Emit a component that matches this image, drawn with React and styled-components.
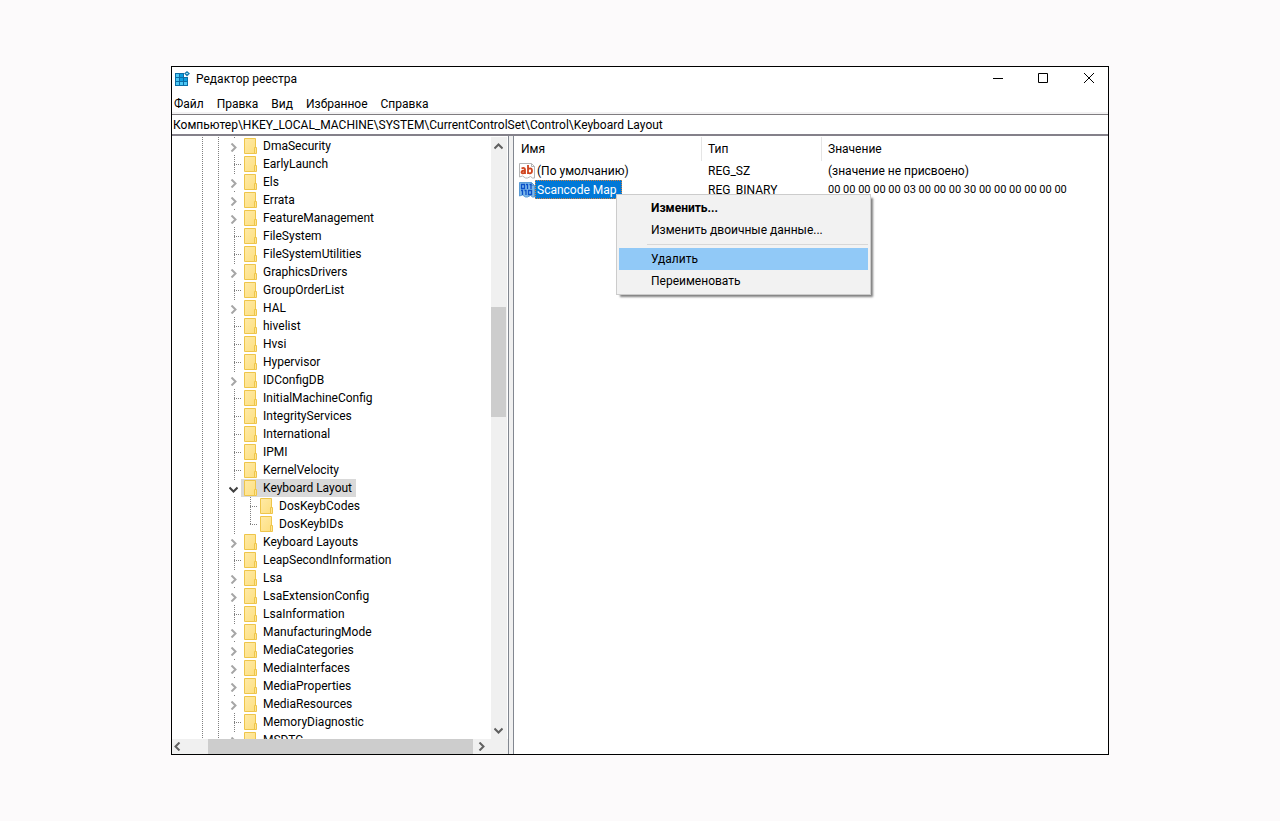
import React, { useState } from 'react'
import styled, { createGlobalStyle, css } from 'styled-components'

const GlobalStyle = createGlobalStyle`
  * {
    box-sizing: border-box;
  }
  body {
    margin: 0;
    background: #fcfafb;
    color: #000;
    font-family: Roboto, "Open Sans", sans-serif;
    font-size: 12px;
    line-height: 18px;
  }
  button, input {
    margin: 0;
    padding: 0;
    border: 0;
    background: none;
    color: inherit;
    font: inherit;
    outline: none;
  }
`

const dotsDown = 'repeating-linear-gradient(to bottom, #808080 0 1px, transparent 1px 2px)'
const dotsAcross = 'repeating-linear-gradient(to right, #808080 0 1px, transparent 1px 2px)'

const Desktop = styled.div`
  display: flex;
  height: 100vh;
  padding: 66px 171px;
`

const Window = styled.main`
  flex: 1;
  display: flex;
  flex-direction: column;
  min-width: 0;
  border: 1px solid #000;
  background: #fff;
`

const TitleBar = styled.header`
  display: flex;
  align-items: center;
  height: 24px;
  padding-left: 2px;
`

const Title = styled.h1`
  flex: 1;
  margin: 0;
  padding-left: 6px;
  font-size: 12px;
  font-weight: 400;
`

const WindowButton = styled.button`
  display: flex;
  align-items: center;
  justify-content: center;
  width: 46px;
  height: 22px;
`

const WindowButtons = styled.div`
  display: flex;
  align-self: flex-start;
  margin-right: -4px;
`

const MenuBar = styled.nav`
  display: flex;
  gap: 13px;
  height: 23px;
  padding: 4px 2px 0;
  border-bottom: 2px solid #f3f2f3;
`

const AddressBar = styled.div`
  display: flex;
  height: 22px;
  border-top: 1px solid #7f7c80;
  border-bottom: 2px solid #84818a;
`

const AddressInput = styled.input`
  flex: 1;
  padding: 0 1px;
`

const Panes = styled.div`
  flex: 1;
  display: flex;
  min-height: 0;
`

const TreePane = styled.section`
  display: flex;
  flex-direction: column;
  width: 337px;
  border-right: 1px solid #828790;
`

const TreeArea = styled.div`
  flex: 1;
  display: flex;
  min-height: 0;
  padding: 1px 1px 0 0;
`

const Tree = styled.ul`
  flex: 1;
  margin: 0;
  padding: 0 0 0 21px;
  overflow: hidden;
  list-style: none;
`

const TreeRow = styled.li`
  display: flex;
  height: 18px;
`

const Guide = styled.span`
  display: flex;
  align-items: center;
  flex: none;
  width: 16px;
  padding-left: 9px;
  background-image: ${dotsDown};
  background-repeat: no-repeat;
  background-position: 9px 0;
  background-size: 1px ${p => (p.$last ? '10px' : '100%')};
`

const Branch = styled.span`
  width: 7px;
  height: 1px;
  background-image: ${dotsAcross};
`

const Expander = styled.button`
  display: flex;
  align-items: center;
  justify-content: center;
  flex: none;
  width: 16px;
  height: 18px;
  padding-top: 2px;
  background: linear-gradient(#808080, #808080) 9px 0 / 1px 1px no-repeat;
`

const Key = styled.button`
  display: flex;
  align-items: center;
  gap: 6px;
  padding: 0 4px 0 3px;
  white-space: nowrap;
  background: ${p => (p.$selected ? '#d9d9d9' : 'none')};
`

const ScrollTrack = styled.div`
  display: flex;
  flex-direction: ${p => (p.$vertical ? 'column' : 'row')};
  flex: none;
  ${p => (p.$vertical ? 'width: 16px;' : 'height: 15px; margin-right: 18px;')}
  background: #f0f0f0;
`

const ScrollButton = styled.button`
  display: flex;
  align-items: center;
  justify-content: center;
  flex: none;
  ${p => (p.$vertical ? 'width: 15px; height: 18px;' : 'width: 17px; height: 15px;')}
  ${p => p.$start && 'margin-left: -3px;'}
`

const ScrollSpace = styled.div`
  flex: ${p => p.$size} 0 0;
`

const ScrollThumb = styled.div`
  flex: ${p => p.$size} 0 0;
  margin-right: ${p => (p.$vertical ? '1px' : '0')};
  background: #cdcdcd;
`

const BottomBar = styled.div`
  background: #f0f0f0;
`

const Splitter = styled.div`
  width: 4px;
  background: #f0f0f0;
`

const ValuesPane = styled.section`
  position: relative;
  flex: 1;
  min-width: 0;
  padding-top: 1px;
  border-left: 1px solid #828790;
`

const ValuesTable = styled.table`
  width: 100%;
  table-layout: fixed;
  border-spacing: 0;
`

const HeadCell = styled.th`
  width: ${p => p.$width || 'auto'};
  height: 24px;
  padding: 0 0 0 ${p => (p.$first ? '7px' : '6px')};
  border-right: ${p => (p.$width ? '1px solid #e5e5e5' : '0')};
  text-align: left;
  font-weight: 400;
`

const Cell = styled.td`
  height: 19px;
  padding: 0 0 0 ${p => (p.$first ? '5px' : '6px')};
  white-space: nowrap;
  ${p => p.$bytes && 'font-size: 11px;'}
`

const ValueName = styled.button`
  display: flex;
  align-items: center;
  height: 19px;
`

const ValueText = styled.span`
  height: 19px;
  padding: 0 4px 0 1px;
  border: 1px dotted transparent;
  line-height: 18px;
  ${p => p.$selected && css`
    border-color: #d0813f;
    background: #0078d7;
    color: #fff;
  `}
`

const ContextMenu = styled.menu`
  position: absolute;
  top: 58px;
  left: 102px;
  width: 255px;
  margin: 0;
  padding: 2px;
  border: 1px solid #ccc;
  background: #f2f2f2;
  box-shadow: 3px 3px 2px -1px rgba(0, 0, 0, .5);
  list-style: none;
`

const MenuItem = styled.button`
  display: block;
  width: 100%;
  height: 22px;
  padding-left: 32px;
  text-align: left;
  font-weight: ${p => (p.$bold ? 700 : 400)};
  background: ${p => (p.$active ? '#91c9f7' : 'none')};
`

const Separator = styled.li`
  height: 1px;
  margin: 3px 0 3px 28px;
  background: #d7d7d7;
`

const RegistryIcon = () => (
  <svg width="16" height="16" viewBox="0 0 16 16" aria-hidden="true">
    <path d="M1 2h9v4h4v9H1z" fill="#0a6da6" />
    <path d="M2 3h3v3H2zM2 7h3v3H2zM2 11h3v3H2zM6 11h3v3H6zM10 11h3v3h-3z" fill="#4cc7f4" />
    <path d="M6 3h3v3H6zM6 7h3v3H6zM10 7h3v3h-3z" fill="#0c9fe0" />
    <path d="M13 0l3 2.500-3 3-3-3z" fill="#1c7fb0" />
    <path d="M12 2h2v1h-2z" fill="#9adff8" />
  </svg>
)

const FolderIcon = () => (
  <svg width="13" height="16" viewBox="0 0 13 16" aria-hidden="true">
    <defs>
      <linearGradient id="folder" x1="0" y1="0" x2="1" y2="1">
        <stop offset="0" stopColor="#ffeaa6" />
        <stop offset="1" stopColor="#fddf80" />
      </linearGradient>
    </defs>
    <path d="M.5.5h11v15H.5z" fill="url(#folder)" stroke="#eec54a" />
    <path d="M10.500 9.500h2v6h-2z" fill="#ffe492" stroke="#eec54a" />
  </svg>
)

const paper = 'M.5.5h12l3 3v11.500h-2l-2-1.500-3 1.500h-2l-3-2-3 1z'

const StringIcon = () => (
  <svg width="16" height="16" viewBox="0 0 16 16" aria-hidden="true">
    <path d={paper} fill="#fff" stroke="#b4b4b4" />
    <path d="M12.500.5v3h3" fill="none" stroke="#b4b4b4" />
    <g fill="none" stroke="#d0451f" strokeWidth="1.800">
      <path d="M2.500 5.500C4.500 4.500 6 5 6 6.500V11M6 7.500C1.500 7.500 2 10.300 3.800 10.300 5 10.300 6 9.500 6 8.500" />
      <path d="M9 2v9M9 7c.5-2 4-2.500 4 .8S9.500 11 9 9" />
    </g>
  </svg>
)

const BinaryIcon = () => (
  <svg width="16" height="16" viewBox="0 0 16 16" aria-hidden="true">
    <path d={paper} fill="#7db8ea" stroke="#5b9bd5" />
    <path d="M12.500.5v3h3" fill="none" stroke="#5b9bd5" />
    <g fill="none" stroke="#0b50c8" strokeWidth="1.300">
      <path d="M2.500 2.500h3v4h-3zM7 2.500h1.500V7M10.500 2.500H12V7" />
      <path d="M2 8.500h1.500V13M5.500 8.500H7V13M9.500 8.500h3v4h-3z" />
    </g>
  </svg>
)

const Chevron = ({ dir, color = '#606060' }) => {
  const angles = { right: 0, down: 90, left: 180, up: 270 }
  return (
    <svg width="9" height="9" viewBox="0 0 9 9" aria-hidden="true">
      <path
        d="M2.500 .5l4 4-4 4"
        fill="none"
        stroke={color}
        strokeWidth="2"
        transform={`rotate(${angles[dir]} 4.500 4.500)`}
      />
    </svg>
  )
}

const menus = ['Файл', 'Правка', 'Вид', 'Избранное', 'Справка']

const keys = [
  { name: 'DmaSecurity', state: 'closed' },
  { name: 'EarlyLaunch' },
  { name: 'Els', state: 'closed' },
  { name: 'Errata', state: 'closed' },
  { name: 'FeatureManagement', state: 'closed' },
  { name: 'FileSystem' },
  { name: 'FileSystemUtilities' },
  { name: 'GraphicsDrivers', state: 'closed' },
  { name: 'GroupOrderList' },
  { name: 'HAL', state: 'closed' },
  { name: 'hivelist' },
  { name: 'Hvsi' },
  { name: 'Hypervisor' },
  { name: 'IDConfigDB', state: 'closed' },
  { name: 'InitialMachineConfig' },
  { name: 'IntegrityServices' },
  { name: 'International' },
  { name: 'IPMI' },
  { name: 'KernelVelocity' },
  { name: 'Keyboard Layout', state: 'open' },
  { name: 'DosKeybCodes', child: true },
  { name: 'DosKeybIDs', child: true, last: true },
  { name: 'Keyboard Layouts', state: 'closed' },
  { name: 'LeapSecondInformation' },
  { name: 'Lsa', state: 'closed' },
  { name: 'LsaExtensionConfig', state: 'closed' },
  { name: 'LsaInformation' },
  { name: 'ManufacturingMode', state: 'closed' },
  { name: 'MediaCategories', state: 'closed' },
  { name: 'MediaInterfaces', state: 'closed' },
  { name: 'MediaProperties', state: 'closed' },
  { name: 'MediaResources', state: 'closed' },
  { name: 'MemoryDiagnostic' },
  { name: 'MSDTC', state: 'closed' },
]

const values = [
  { name: '(По умолчанию)', type: 'REG_SZ', data: '(значение не присвоено)', icon: StringIcon },
  {
    name: 'Scancode Map',
    type: 'REG_BINARY',
    data: '00 00 00 00 00 03 00 00 00 30 00 00 00 00 00 00',
    icon: BinaryIcon,
    selected: true,
  },
]

const TreeItem = ({ item, selected, onSelect }) => (
  <TreeRow>
    <Guide />
    <Guide />
    {item.child && <Guide />}
    {item.state ? (
      <Expander aria-label={item.name}>
        {item.state === 'open'
          ? <Chevron dir="down" color="#404040" />
          : <Chevron dir="right" color="#a6a6a6" />}
      </Expander>
    ) : (
      <Guide $last={item.last}><Branch /></Guide>
    )}
    <Key $selected={selected} onClick={() => onSelect(item.name)}>
      <FolderIcon />
      {item.name}
    </Key>
  </TreeRow>
)

const App = () => {
  const [current, setCurrent] = useState('Keyboard Layout')
  const [path, setPath] = useState(
    'Компьютер\\HKEY_LOCAL_MACHINE\\SYSTEM\\CurrentControlSet\\Control\\Keyboard Layout'
  )

  return (
    <Desktop>
      <GlobalStyle />
      <Window>
        <TitleBar>
          <RegistryIcon />
          <Title>Редактор реестра</Title>
          <WindowButtons>
            <WindowButton aria-label="Свернуть">
              <svg width="11" height="11"><path d="M1 5.500h10" stroke="#000" /></svg>
            </WindowButton>
            <WindowButton aria-label="Развернуть">
              <svg width="11" height="11"><path d="M.5.5h9v9h-9z" fill="none" stroke="#000" /></svg>
            </WindowButton>
            <WindowButton aria-label="Закрыть">
              <svg width="11" height="11"><path d="M0 0l10 10M10 0L0 10" stroke="#000" /></svg>
            </WindowButton>
          </WindowButtons>
        </TitleBar>
        <MenuBar>
          {menus.map(name => <button key={name}>{name}</button>)}
        </MenuBar>
        <AddressBar>
          <AddressInput aria-label="Путь" value={path} onChange={e => setPath(e.target.value)} />
        </AddressBar>
        <Panes>
          <TreePane>
            <TreeArea>
              <Tree>
                {keys.map(item => (
                  <TreeItem
                    key={item.name}
                    item={item}
                    selected={item.name === current}
                    onSelect={setCurrent}
                  />
                ))}
              </Tree>
              <ScrollTrack $vertical>
                <ScrollButton $vertical aria-label="Вверх"><Chevron dir="up" /></ScrollButton>
                <ScrollSpace $size={152} />
                <ScrollThumb $vertical $size={110} />
                <ScrollSpace $size={304} />
                <ScrollButton $vertical aria-label="Вниз"><Chevron dir="down" /></ScrollButton>
              </ScrollTrack>
            </TreeArea>
            <BottomBar>
              <ScrollTrack>
                <ScrollButton $start aria-label="Влево"><Chevron dir="left" /></ScrollButton>
                <ScrollSpace $size={22} />
                <ScrollThumb $size={265} />
                <ScrollButton aria-label="Вправо"><Chevron dir="right" /></ScrollButton>
              </ScrollTrack>
            </BottomBar>
          </TreePane>
          <Splitter />
          <ValuesPane>
            <ValuesTable>
              <thead>
                <tr>
                  <HeadCell $first $width="188px">Имя</HeadCell>
                  <HeadCell $width="120px">Тип</HeadCell>
                  <HeadCell>Значение</HeadCell>
                </tr>
              </thead>
              <tbody>
                {values.map(({ name, type, data, selected, icon: Icon }) => (
                  <tr key={name}>
                    <Cell $first>
                      <ValueName>
                        <Icon />
                        <ValueText $selected={selected}>{name}</ValueText>
                      </ValueName>
                    </Cell>
                    <Cell>{type}</Cell>
                    <Cell $bytes={type === 'REG_BINARY'}>{data}</Cell>
                  </tr>
                ))}
              </tbody>
            </ValuesTable>
            <ContextMenu>
              <li><MenuItem $bold>Изменить...</MenuItem></li>
              <li><MenuItem>Изменить двоичные данные...</MenuItem></li>
              <Separator role="separator" />
              <li><MenuItem $active>Удалить</MenuItem></li>
              <li><MenuItem>Переименовать</MenuItem></li>
            </ContextMenu>
          </ValuesPane>
        </Panes>
      </Window>
    </Desktop>
  )
}

export default App
